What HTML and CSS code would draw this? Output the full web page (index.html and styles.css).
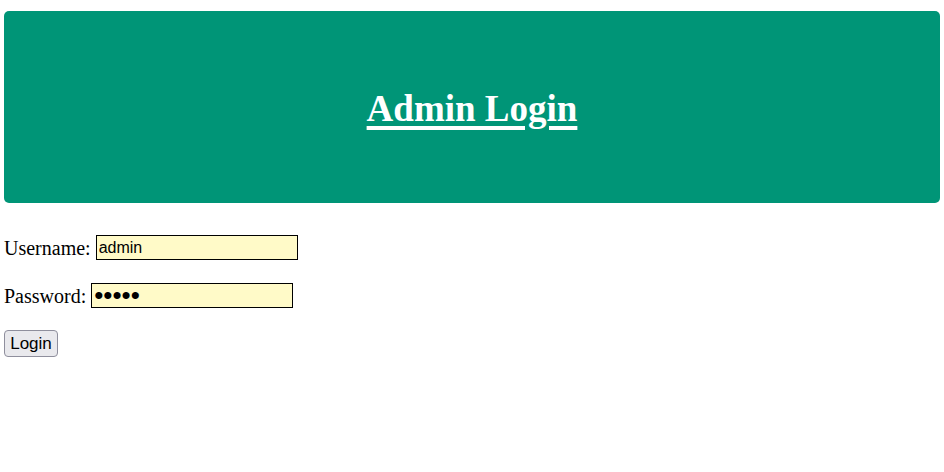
FILE: index.html
```html
<!DOCTYPE html>
<html>
<head>
<meta charset="utf-8">
<title>Admin Login</title>
<link rel="stylesheet" href="styles.css">
</head>
<body>
<div class="header">
  <h1 class="title">Admin Login</h1>
</div>
<form class="login-form">
  <div class="row">
    <label class="label" for="user">Username:</label>
    <input class="field" id="user" type="text" value="admin">
  </div>
  <div class="row">
    <label class="label" for="pass">Password:</label>
    <input class="field field-pass" id="pass" type="password" value="admin">
  </div>
  <div class="row row-btn">
    <button class="btn" type="button">Login</button>
  </div>
</form>
</body>
</html>
```
FILE: styles.css
```css
html, body {
  margin: 0;
  padding: 0;
  background: #ffffff;
}
body {
  padding: 11px 4px 0 4px;
  font-family: "Liberation Serif", "Times New Roman", serif;
  color: #000;
}
.header {
  height: 192px;
  background: #009577;
  border-radius: 5px;
  display: flex;
  align-items: center;
  justify-content: center;
}
.title {
  margin: 0;
  color: #ffffff;
  font-size: 37px;
  font-weight: bold;
  text-decoration: underline;
  text-decoration-thickness: 4px;
  text-underline-offset: 5px;
  line-height: 1;
  position: relative;
  top: 1px;
}
.login-form {
  margin-top: 32px;
  display: flex;
  flex-direction: column;
}
.row {
  display: flex;
  align-items: center;
  margin-bottom: 23px;
}
.row-btn {
  margin-top: -1px;
}
.label {
  font-size: 20px;
  margin-right: 5px;
  line-height: 25px;
  position: relative;
  top: 1px;
}
.field {
  box-sizing: border-box;
  width: 202px;
  height: 25px;
  margin: 0;
  padding: 1px 2px;
  border: 1px solid #000;
  background: #fffac8;
  font-family: "Liberation Sans", Arial, sans-serif;
  font-size: 16px;
  color: #000;
  border-radius: 0;
  outline: none;
}
.field-pass {
  font-size: 26px;
  padding: 0 2px;
  line-height: 23px;
}
.btn {
  box-sizing: border-box;
  width: 54px;
  height: 27px;
  margin: 0;
  padding: 0;
  background: #e9e9ed;
  border: 1px solid #8f8f9d;
  border-radius: 4px;
  font-family: "Liberation Sans", Arial, sans-serif;
  font-size: 17px;
  color: #000;
}
```
